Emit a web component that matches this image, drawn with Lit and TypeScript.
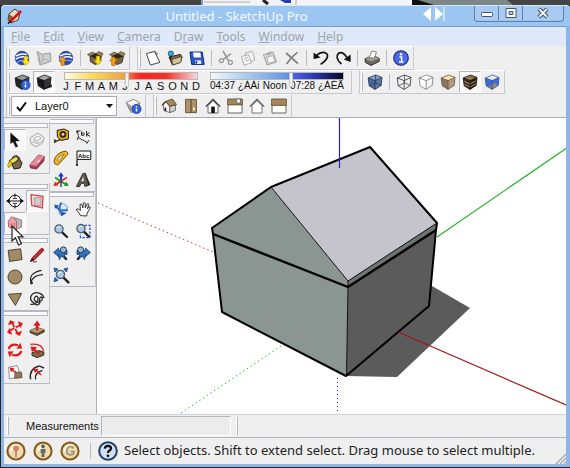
import { LitElement, html, svg, css } from "lit";
import { customElement, property } from "lit/decorators.js";

const globe = svg`
  <circle cx="8" cy="8" r="6.8" fill="#2448b8" stroke="#24408c" stroke-width=".8"/>
  <path d="M2 6.2Q7 2.6 13 4.6M1.6 9.2Q8 5 14.4 8" stroke="#fff" stroke-width="1.5" fill="none"/>
  <path d="M3 12.4Q8 9 13.6 11" stroke="#8fb4f4" stroke-width="1.1" fill="none"/>`;
const box = svg`
  <path d="M3 6L9 3.6L14.4 6.4L13 12.6L8 14.6L3.4 11.6Z" fill="#75623f" stroke="#2d2518" stroke-width=".8"/>
  <path d="M3 6L8.4 8.4L14.4 6.4L9 3.6Z" fill="#2d2518"/>
  <path d="M3 6L.4 4.6L5.6 2L8.6 3.8ZM14.4 6.4L16 3.6L11.4 1.4L9 3.8Z" fill="#9a8660" stroke="#3b311f" stroke-width=".6"/>`;
const down = (x: number, y: number) => svg`
  <path transform="translate(${x} ${y})" d="M-1.7 -4.4H1.7V0H4L0 4.4L-4 0H-1.7Z" fill="#ffe313" stroke="#c49700" stroke-width=".6"/>`;
const up = (x: number, y: number) => svg`
  <path transform="translate(${x} ${y})" d="M-1.7 4.4H1.7V0H4L0 -4.4L-4 0H-1.7Z" fill="#f59a18" stroke="#a85e08" stroke-width=".6"/>`;
const info = svg`
  <circle cx="11.5" cy="11" r="4.6" fill="#2e63d8" stroke="#173a96" stroke-width=".7"/>
  <path d="M11.5 10.4V13.4M11.5 8V9.2" stroke="#fff" stroke-width="1.5"/>`;
const cube = (top: string, left: string, right: string, edge: string, extra: unknown = "") => svg`
  <path d="M1.2 4L8.6 1L15 3.4L8.2 6.6Z" fill="${top}"/>
  <path d="M1.2 4L8.2 6.6L8 15.4L2.2 11.8Z" fill="${left}"/>
  <path d="M15 3.4L8.2 6.6L8 15.4L14.2 11.4Z" fill="${right}"/>
  ${extra}
  <path d="M1.2 4L8.6 1L15 3.4L14.2 11.4L8 15.4L2.2 11.8ZM1.2 4L8.2 6.6L15 3.4M8.2 6.6L8 15.4" fill="none" stroke="${edge}" stroke-width=".8"/>`;
const lens = (x: number, y: number) => svg`
  <path d="M${x + 2.6} ${y + 2.8}L${x + 8} ${y + 8}" stroke="#222" stroke-width="2.4" stroke-linecap="round"/>
  <circle cx="${x}" cy="${y}" r="4.1" fill="#a9c8e4" stroke="#4c5d70" stroke-width="1.3"/>
  <path d="M${x - 2} ${y - 1}Q${x - 1} ${y - 2.4} ${x + 1} ${y - 2.2}" stroke="#fff" fill="none"/>`;

const icons: Record<string, unknown> = {
  globeDown: svg`${globe}${down(11.8, 11)}`,
  globeUp: svg`${globe}${up(4.8, 11)}`,
  terrain: svg`<path d="M1 1.6L6.4 4.2L14.4 3L15 11.4L4 15L3.2 6.6Z" fill="#cfcfcf" stroke="#9c9c9c"/><path d="M1 1.6L2.4 10L4 15M6.4 4.2L7 9L15 11.4M7 9L4 15" stroke="#b0b0b0" fill="none"/>`,
  boxDown: svg`${box}${down(11, 10.4)}`,
  boxUp: svg`${box}${up(4.4, 11)}`,
  page: svg`<path d="M1.4 3.6L9.6 1.4L14.8 12.4L5.4 15Z" fill="#fff" stroke="#444" stroke-width="1"/><path d="M9.6 1.4L12.6 3.6L10.6 4.4Z" fill="#ccc" stroke="#444" stroke-width=".7"/>`,
  open: svg`<path d="M2 7L13.6 4.4L15 7.4L13.4 12.4L5.4 15Z" fill="#7b6746" stroke="#2c2418"/><path d="M5 9.4L15 6.6L13.6 12.4L5.6 15Z" fill="#d4c39a" stroke="#4e4128" stroke-width=".7"/><circle cx="3.8" cy="3.6" r="2.6" fill="#35a8dc" stroke="#0b4c74" stroke-width=".8"/><path d="M3.6 6V9" stroke="#111" stroke-width="1.2"/>`,
  save: svg`<path d="M1 2H13.2L15.2 14.4H2.6Z" fill="#2b55c8" stroke="#12297e"/><path d="M4 2.4H11.4L12 7.6H4.8Z" fill="#fff"/><path d="M6 10.2H12L12.4 14H6.4Z" fill="#dfe6fb"/><path d="M7.4 11V13.6" stroke="#12297e" stroke-width="1.4"/>`,
  cut: svg`<path d="M5 1L10.4 10.6M13 3.6L5 9.6" stroke="#999" stroke-width="1.6" fill="none"/><circle cx="12.4" cy="12.4" r="2" fill="none" stroke="#999" stroke-width="1.3"/><circle cx="3.4" cy="10.6" r="2" fill="none" stroke="#999" stroke-width="1.3"/>`,
  copy: svg`<path d="M5 3L12.6 1.4L14.8 10L8 12.6Z" fill="#f4f4f4" stroke="#b0b0b0"/><path d="M1.4 6.6L8.6 4.6L11.4 13L4 15.2Z" fill="#f6f6f6" stroke="#b0b0b0"/><path d="M4 8.6L8 7.6M5 11L9 9.8" stroke="#b4b4b4"/>`,
  paste: svg`<path d="M1.4 4.6L11 2L14.6 12L5 15Z" fill="#d4d4d4" stroke="#a4a4a4"/><path d="M4.6 7.4L11 5.6L13 11.4L6.6 13.4Z" fill="#f8f8f8" stroke="#b0b0b0"/><path d="M4.6 3.4L8.6 1.2L9 4.2L5.4 5.2Z" fill="#a8a8a8"/>`,
  del: svg`<path d="M2 3Q8 8 14 13.6M13.4 2.4Q7 7 2.6 14" stroke="#808080" stroke-width="1.7" fill="none"/>`,
  undo: svg`<path d="M3.6 5.4Q9 .4 13.6 3.6Q17 8 7.6 14.4" stroke="#111" stroke-width="1.7" fill="none"/><path d="M.6 2.4V9L7.6 7.4Z" fill="#111"/>`,
  redo: svg`<path d="M12 7.6Q7.8 1 3.6 3.2Q-.6 7.6 6.4 14" stroke="#111" stroke-width="1.7" fill="none"/><path d="M15.6 4.4V12L8.8 9.4Z" fill="#111"/>`,
  print: svg`<path d="M1 8.6L9.6 5.6L15.2 8.4V11.4L7 15.4L1.4 12.4Z" fill="#6d6a60" stroke="#2f2d29"/><path d="M1 8.6L6.8 11.2L15.2 8.4L9.6 5.6Z" fill="#a29e90"/><path d="M5 7.6L8 1L12.4 2L10.4 8.2Z" fill="#fff" stroke="#666" stroke-width=".8"/>`,
  about: svg`<circle cx="8" cy="8" r="7.3" fill="#4a68ee" stroke="#1b2b6c" stroke-width="1.1"/><path d="M6.4 7H8.6V12M6 12.1H10.6" stroke="#fff" stroke-width="1.5" fill="none"/><circle cx="8" cy="4.2" r="1.2" fill="#fff"/>`,
  shadowInfo: svg`${cube("#9a9a9a", "#252525", "#3d3d3d", "#111")}${info}`,
  shadow: svg`<path d="M8 15.6L16 13L15.600 10.400L9 11Z" fill="#222"/>${cube("#a8a8a8", "#181818", "#333", "#111")}`,
  xray: cube("#87a4cc", "#4d6a98", "#5877a8", "#1f3252", svg`<path d="M2.2 11.8L8.6 8.8L14.2 11.4M8.6 8.8V1" stroke="#1f3252" stroke-width=".7" fill="none"/>`),
  wire: cube("none", "none", "none", "#333", svg`<path d="M2.2 11.8L8.6 8.8L14.2 11.4M8.6 8.8V1" stroke="#333" stroke-width=".7" fill="none"/>`),
  hidden: cube("#fff", "#fff", "#f2f2f2", "#777"),
  shaded: cube("#f6e6a8", "#8a7560", "#b39a78", "#665544"),
  textured: cube("#8c7044", "#3a2c1c", "#241a10", "#111", svg`<path d="M1.6 7L8 10L14.8 6.6M1.8 10L8 13L14.4 9.6M3.6 3.2L10.6 5.6" stroke="#b09468" stroke-width="1" fill="none"/>`),
  mono: cube("#f2ecc8", "#8a7b50", "#9c8b62", "#3454a8", svg`<path d="M1.2 4L8.2 6.6L8.1 11L2.2 11.8Z" fill="#3a6be0"/><path d="M8.2 6.6L15 3.4L14.2 11.4L11 8.4L8.1 11Z" fill="#3a6be0"/>`),
  layers: svg`<path d="M1 4.6L8.6 1.4L14.8 5L13 11.6L6 14.6Z" fill="#c8c8c8" stroke="#777" stroke-width=".8"/><path d="M1 4.6L8.6 1.4L14.8 5L6.6 8.4Z" fill="#fafafa" stroke="#888" stroke-width=".8"/><path d="M2.4 7L6.6 10.8M3.6 9.6L6.4 12.6" stroke="#777"/>${info}`,
  iso: svg`<path d="M2.4 7L5 4L8.8 8V14.6L2.8 12.6Z" fill="#fff" stroke="#555" stroke-width=".8"/><path d="M8.8 8L14.4 7.2V12.4L8.8 14.6Z" fill="#d4d4d4" stroke="#555" stroke-width=".8"/><path d="M4.6 3.4L11.4 1L15.6 6.6L8.8 8.4Z" fill="#a4875a" stroke="#4a3b25" stroke-width=".8"/><path d="M4.6 3.4L1 7.4" stroke="#4a3b25" stroke-width="1.4"/><path d="M4.4 9.6V13" stroke="#222" stroke-width="1.8"/>`,
  topv: svg`<path d="M2.600 1.400H13.400V14.600H2.600Z" fill="#b0936a" stroke="#6e5a3a"/><path d="M8 1.400V14.600" stroke="#4e3f28"/><path d="M10 9.400H11.600V12H10Z" fill="#fff"/>`,
  front: svg`<path d="M3 7.6V15H13V7.6L8 2.6Z" fill="#fff" stroke="#666"/><path d="M.8 8.6L8 1.4L15.2 8.6" fill="none" stroke="#333" stroke-width="1.3"/><path d="M6.2 8.6H9.8V15H6.2Z" fill="#111"/>`,
  rightv: svg`<path d="M1 6.6H15V15H1Z" fill="#fff" stroke="#666"/><path d="M.6 1H15.4V6.8H.6Z" fill="#a4875a" stroke="#5e4c30" stroke-width=".8"/><path d="M9.6 1H13.4V5H9.6Z" fill="#fff" stroke="#555" stroke-width=".7"/>`,
  back: svg`<path d="M3 7.6V15H13V7.6L8 2.6Z" fill="#fff" stroke="#777"/><path d="M.8 8.6L8 1.4L15.2 8.6" fill="none" stroke="#555" stroke-width="1.2"/>`,
  leftv: svg`<path d="M1 6.6H15V15H1Z" fill="#fff" stroke="#666"/><path d="M.6 1H15.4V7.4H.6Z" fill="#a4875a" stroke="#5e4c30" stroke-width=".8"/>`,
  select: svg`<path d="M3.400 .4V12L6 10L8.600 15.600L11 14.600L8.400 9.200L12.800 9Z" fill="#111"/>`,
  component: svg`<path d="M1 6L8.600 1L15 5.400L13.600 11L6.600 15L2 11.600Z" fill="#f0f0f0" stroke="#a6a6a6"/><path d="M5 6.600L9 4L12 6.200L8 9Z" fill="#fff" stroke="#999" stroke-width=".8"/><path d="M2 11.600L5 9.800V6.600M5 9.800L8 12V9M8 12L13.600 8.600" fill="none" stroke="#b4b4b4"/>`,
  paint: svg`<path d="M4 8L11.6 3.8L15 9L13 14L7 15Z" fill="#786b4d" stroke="#211d13"/><ellipse cx="6.8" cy="6.4" rx="5" ry="2.4" transform="rotate(-32 6.8 6.4)" fill="#f4de4a" stroke="#222"/><path d="M2.6 7.6Q-.4 11 1.4 13.6Q4.6 12.8 5 8.4Z" fill="#f7d21c" stroke="#8f7400" stroke-width=".7"/><path d="M5 4Q9 -1 13 4.4" stroke="#222" fill="none"/>`,
  eraser: svg`<path d="M.8 11L9.400 1L15.400 2.600L14.800 7L7.6 15L1.6 14Z" fill="#a83a54" stroke="#6e2334" stroke-width=".8"/><path d="M.8 11L9.400 1L15.400 2.600L7.400 12Z" fill="#e58a9c"/><path d="M7.6 8.4L10.8 5.4L10.4 8Z" fill="#fff"/>`,
  section: svg`<circle cx="8" cy="8" r="5.8" fill="#fff" stroke="#111"/><path d="M-.4 8H16.400M8 .6V4.6M8 11.400V15.400" stroke="#111"/><path d="M-.6 8L2.4 5.4V10.6ZM16.6 8L13.6 5.4V10.6Z" fill="#111"/><path d="M5.800 5.600H10.200M5.800 10.400H10.200" stroke="#333"/>`,
  planes: svg`<path d="M5 5L12 4.4V12.6L6 12.4Z" fill="#c9c9c9" stroke="#777"/><path d="M2 1.6L14 3.4L13.4 15L2.8 12.4Z" fill="#eec5c5" fill-opacity=".45" stroke="#d7434c" stroke-width="1.3"/>`,
  cuts: svg`<path d="M7 2.6L14.6 5V12L8 15L5 12Z" fill="#b8b8b8" stroke="#8a8a8a"/><path d="M1.2 6.4L4.8 1.6L9.4 6V14.6L1.8 12Z" fill="#e7a5a5" stroke="#cc5058" stroke-width="1"/><path d="M4.6 8V12.4M7 8V13" stroke="#b86c70"/>`,
  rect: svg`<path d="M1.2 3.4L13.6 1.8L15 12.6L2.6 14.4Z" fill="#a18a66" stroke="#50452f"/>`,
  circle: svg`<circle cx="8" cy="8" r="7" fill="#a18a66" stroke="#50452f"/>`,
  polygon: svg`<path d="M1.2 3.2L14.6 2.4L8.4 14.4Z" fill="#a18a66" stroke="#50452f"/>`,
  pencil: svg`<path d="M1.4 14.6L3 11.2L12 1.6Q14.4 .8 14.8 3.4L5.4 13Z" fill="#d8232b" stroke="#5c0b10" stroke-width=".8"/><path d="M1.4 14.6L3 11.2L5.4 13Z" fill="#222"/><path d="M4 14.8H8" stroke="#222" stroke-width=".8"/>`,
  arc: svg`<path d="M2.4 14.6Q-1.6 4 12.6 1.4M2 13.4Q4 6 14 5.6" fill="none" stroke="#222" stroke-width="1.2"/><circle cx="2.6" cy="14" r="1.4" fill="#222"/>`,
  freehand: svg`<path d="M1.4 13.4Q8 14 9 8Q9 4 6.4 5.6Q4 8 6.6 10.4Q10 12 12.6 9.4Q14.6 6.6 12 6Q9.6 7 11 11.6Q9 15.6 5.4 12.4Q1.2 9.8 1.6 6.2Q3.4 1 9.2 1.8Q14.2 3 15 7" fill="none" stroke="#2a2a2a" stroke-width="1.3"/>`,
  move: svg`<path d="M5 2.600L10.600 13.400M13.400 5L2.600 10.800" stroke="#e01a1a" stroke-width="1.8"/><path d="M1.600 4.600L3.400 .6L7.400 2.600ZM11.400 1.800L15.400 3.400L13.400 7.400ZM14.400 11.400L12.600 15.400L8.600 13.400ZM4.600 14.200L.6 12.600L2.600 8.600Z" fill="#e01a1a" stroke="#e01a1a" stroke-width=".8"/><circle cx="8" cy="8" r="1" fill="#fff"/>`,
  pushpull: svg`<path d="M1 10.4L8 7.4L15.2 9.6V12L8 15.6L1 12.6Z" fill="#5f5138" stroke="#312919" stroke-width=".7"/><path d="M1 10.4L8 7.4L15.2 9.6L8 13Z" fill="#b6a27c"/><path d="M6.8 10.4V5.8H4.4L8.2 .6L11.6 5.8H9.4V10.4Z" fill="#e01a1a"/>`,
  rotate: svg`<path d="M1.6 7Q4 1 11 3.2M14.4 9Q12 15 5 12.8" stroke="#e01a1a" stroke-width="2.2" fill="none"/><path d="M9.4 6.8L15.2 6.4L13.4 .8ZM6.6 9.2L.8 9.6L2.6 15.2Z" fill="#e01a1a"/>`,
  follow: svg`<path d="M3 10.6L10.4 8.6L15 10.4L14.6 13.2L8 15.6L3 13.4Z" fill="#7d6b4b" stroke="#352c1c"/><path d="M1.4 2.4Q13 .6 14.6 9.4" stroke="#e01a1a" stroke-width="1.4" fill="none"/><path d="M1.400 4.400L3 10L4.800 8.400L9.400 12.6L10.8 11L6.400 7L8.200 5.200Z" fill="#e01a1a"/>`,
  scale: svg`<path d="M1.6 3.4L10 1.6L14.6 13.4L2.4 14.6Z" fill="#fff" stroke="#777" stroke-width=".8"/><path d="M8 8.400L14.4 8L15 13.6L7.600 14.2Z" fill="#8e7a58" stroke="#4e422d" stroke-width=".7"/><path d="M2.6 3.6L7.6 4.2L6.2 5.4L10 8.4L9 9.6L5 6.8L4 8.6Z" fill="#e01a1a"/>`,
  offset: svg`<path d="M1.6 15.4Q-.4 5 10 2M6.6 15.4Q5 9.4 13.4 6.4" fill="none" stroke="#2a2a2a" stroke-width="1.4"/><path d="M4 4.8L9.6 5L8.4 6.2L12.6 10.6L11.4 11.6L7.4 7.6L6.2 9Z" fill="#e01a1a"/><path d="M10 1.8L15 4" stroke="#2a2a2a" stroke-width="1.4"/>`,
  tape: svg`<path d="M4.2 2.4L11 1L15.400 3V11L8.2 12.4L4.4 9Z" fill="#e8b21f" stroke="#221b08"/><circle cx="10" cy="6.400" r="3.4" fill="#332c1d"/><circle cx="10" cy="6.4" r="1.4" fill="#f3d98a"/><path d="M8 11.4L2 13.6L1.6 11.4M1 14.6L3.6 13.2" stroke="#3a2c08" stroke-width="1.5" fill="none"/>`,
  dimension: svg`<path d="M2 2L3.4 7.6M1 4.2L5.4 2.6M6.6 3.4V7.4Q9.4 8 9.4 5.6Q9 4.2 6.6 5.6M11.6 3V8.6M14.6 4.6L11.8 6.4L15 8.4" stroke="#222" fill="none"/><path d="M2.6 9.4L13 14.8M2 12L4 8M11.6 15.8L14 12.2" stroke="#333" fill="none"/>`,
  protractor: svg`<path d="M1 11Q3 2.600 12 1.200Q15.400 1.400 14.600 4.600L5.400 14.600Q1.200 15.400 1 11Z" fill="#f0b72a" stroke="#6f5209"/><path d="M4.4 10.600Q5.400 5.600 11.200 4.400L5.600 11.400Z" fill="#f0f0f0" stroke="#8d6a10" stroke-width=".8"/>`,
  label: svg`<path d="M2 1H15.800V9.4H2Z" fill="#fff" stroke="#111"/><path d="M2 9.4V15.6" stroke="#111" stroke-width="1.200"/><circle cx="2" cy="15" r="1" fill="#111"/><text x="3" y="7.6" font-size="6" font-weight="700" font-family="Liberation Sans, sans-serif" fill="#111">Abc</text>`,
  axes: svg`<path d="M8 9V3" stroke="#2431d8" stroke-width="2"/><path d="M8 .2L5.2 4.4H10.8Z" fill="#2431d8"/><path d="M8 9L3.6 12" stroke="#d22" stroke-width="2"/><path d="M.4 14L2 9.8L5.4 13.4Z" fill="#d22"/><path d="M2 5.4L13 12.4" stroke="#189a22" stroke-width="1.8"/><path d="M15.8 14L10.8 13.8L13.4 9.8Z" fill="#189a22"/><path d="M8 9L14 5.400" stroke="#d22" stroke-width="1.6"/><path d="M8 9V15" stroke="#224" stroke-width="1.2"/>`,
  text3d: svg`<path d="M1.4 14.4L7.8 1.6L10.4 1.2L13.6 13.4L9.8 14.4L9.2 11L5.8 11.8L4.6 14.6Z" fill="#5f5a50" stroke="#1d1b17" stroke-width=".8"/><path d="M8 4.8L9 8.8L6.4 9.4Z" fill="#eee"/><path d="M10.4 1.2L15.4 12.8L13.6 13.4Z" fill="#221f1a"/>`,
  orbit: svg`<path d="M4.600 4.6L10.6 2.4L14.6 5.6L12.600 12L6.600 13.400Z" fill="#d5e5f6" stroke="#5b7fae" stroke-width=".7"/><path d="M3 5.600Q7 11.4 15 8.6M8.400 1.400Q4.400 7.600 9.400 13.600" fill="none" stroke="#2b6cc4" stroke-width="1.8"/><path d="M1.400 3.400L5.800 4.8L2 7.8ZM13.2 12.4L7.800 15.4L8.8 10.8Z" fill="#1c529f"/>`,
  pan: svg`<path d="M5.6 14.6Q3.4 10.6 1.4 9Q1.6 7.4 3.2 8L5.4 9.4L5 3.6Q5.8 2.4 6.8 3.6L7.8 7L8.4 2Q9.6 .8 10.2 2.2L10.2 6.8L12.2 2.8Q13.6 2.2 13.6 3.6L12.4 7.8L14.4 5.6Q15.6 5.8 15 7.2L12.2 12.2L11.6 15Z" fill="#fff" stroke="#222" stroke-width=".9"/>`,
  zoom: lens(6, 6),
  zoomWin: svg`<path d="M9.6 2.4H15V14.6H5.4V11" stroke="#2440c8" stroke-width="1.2" stroke-dasharray="2.4 1.4" fill="none"/>${lens(6, 5.6)}`,
  prev: svg`<path d="M9 9L13 14" stroke="#222" stroke-width="2.4" stroke-linecap="round"/><path d="M.6 7.400L5.600 3V5.400H14V9.4H11.400V13L8.800 11L6.400 14.600L5.600 9.600V11.800Z" fill="#2c72c0" stroke="#153e72" stroke-width=".8"/><circle cx="10.400" cy="4.800" r="3" fill="#8fbbe6" stroke="#333"/>`,
  next: svg`<path d="M7 9L3 14" stroke="#222" stroke-width="2.4" stroke-linecap="round"/><path d="M15.400 7.400L10.400 3V5.400H2V9.4H4.600V13L7.200 11L9.600 14.600L10.400 9.600V11.800Z" fill="#2c72c0" stroke="#153e72" stroke-width=".8"/><circle cx="5.600" cy="4.800" r="3" fill="#8fbbe6" stroke="#333"/>`,
  extents: svg`${lens(7.4, 7.4)}<path d="M1 1L5 2L2 5ZM14.6 1L10.8 2L13.4 5ZM1 14.6L2 10.6L5 13.4Z" fill="#2c72c0" stroke="#1d4a80" stroke-width=".9"/>`,
};

@customElement("tool-button")
class ToolButton extends LitElement {
  @property() icon = "";
  @property() label = "";
  @property({ type: Boolean }) pressed = false;
  static styles = css`
    :host { display: block; width: 22px; height: 22px; flex: none; }
    .tool { display: grid; place-items: center; box-sizing: border-box; width: 100%; height: 100%; margin: 0; padding: 0; border: 1px solid transparent; background: none; }
    .pressed { background: #f8f8f8; border-color: #b4b4c0 #fff #fff #b4b4c0; }
    .glyph { width: 16px; height: 16px; overflow: visible; }
  `;
  render() {
    return html`<button class="tool ${this.pressed ? "pressed" : ""}" aria-label=${this.label}>
      <svg class="glyph" viewBox="0 0 16 16" aria-hidden="true">${icons[this.icon]}</svg>
    </button>`;
  }
}

type Tool = [string, string, boolean?];
const tools = (list: (Tool | null)[]) =>
  list.map((t) =>
    t ? html`<tool-button icon=${t[0]} label=${t[1]} ?pressed=${t[2] ?? false}></tool-button>` : html`<span class="sep"></span>`
  );

const months = ["J", "F", "M", "A", "M", "J", "J", "A", "S", "O", "N", "D"];
const menus = ["File", "Edit", "View", "Camera", "Draw", "Tools", "Window", "Help"];

@customElement("app-root")
class AppRoot extends LitElement {
  static styles = css`
    :host { display: flex; flex-direction: column; box-sizing: border-box; min-height: 100vh; background: #222; font: 11px/14px "Liberation Sans", Arial, sans-serif; color: #111; }
    .behind { display: block; width: 100%; height: 5px; flex: none; }
    .window { flex: 1; display: flex; flex-direction: column; margin: 0 0 2px 1px; padding: 0 4px 3px 3px; background: #8eb4e8; border-radius: 4px 4px 0 0; }
    .title { display: flex; align-items: flex-start; height: 21px; background: #9cc6f2; margin: 0 -4px 0 -3px; padding: 0 6px 0 5px; border-radius: 4px 4px 0 0; border-top: 1px solid #d4e8fc; box-sizing: border-box; }
    .logo { width: 16px; height: 16px; margin-top: 2px; }
    .caption { flex: 1; margin: 0; padding-left: 28px; text-align: center; font: 13px/20px "Noto Sans", sans-serif; color: #f4f8ff; }
    .spread { width: 22px; height: 15px; flex: none; margin-right: 29px; }
    .winbtns { display: flex; height: 15px; border: 1px solid #5d7fae; border-top: 0; border-radius: 0 0 4px 4px; flex: none; }
    .winbtn { width: 24px; height: 14px; padding: 0; border: 0; border-right: 1px solid #5d7fae; background: #a9cbf1; display: grid; place-items: center; }
    .winbtn:last-child { width: 40px; border-right: 0; border-radius: 0 0 4px 0; }
    .winbtn svg { width: 14px; height: 12px; }
    .menu { display: flex; height: 20px; gap: 13px; padding: 0 7px; background: #dfe9f9; border-top: 1px solid #7c9ccc; box-sizing: border-box; }
    .item { padding: 0; border: 0; background: none; font: 12px/18px "Noto Sans", sans-serif; color: #a0a4a8; }
    .row { display: flex; height: 24px; padding-left: 2px; gap: 7px; background: #efefef; box-sizing: border-box; }
    .bar { display: flex; align-items: center; border: 1px solid #c8c8d0; border-top-color: #fff; box-sizing: border-box; height: 24px; padding-right: 1px; }
    .grip { width: 2px; height: 18px; margin: 0 1px; border-right: 1px solid #b4b4bc; border-left: 1px solid #fff; box-sizing: border-box; }
    .sep { width: 1px; height: 16px; background: #bcbcc4; margin: 0 3px; flex: none; }
    .sliders { display: flex; gap: 4px; padding: 0 2px 0 5px; }
    .slider { display: flex; flex-direction: column; width: 142px; }
    .range { appearance: none; display: block; position: relative; z-index: 1; margin: 0 4px; width: auto; height: 8px; border: 1px solid #b8b8b8; box-sizing: border-box; }
    .range::-webkit-slider-runnable-track { height: 6px; }
    .range::-webkit-slider-thumb { appearance: none; width: 4px; height: 14px; background: #f4f4f4; border: 1px solid #c8c8c8; border-top: 0; box-sizing: border-box; }
    .months { background: linear-gradient(90deg, #fffbe0, #fbd84c 22%, #f3a440 44%, #f22 56%, #f33022 76%, #f99 92%, #f0dcdc); }
    .hours { background: linear-gradient(90deg, #f4f8ff, #b4d4f4 22%, #5f94e8 58%, #4a62ee 62%, #2834a8 80%, #080820); }
    .ticks { display: grid; grid-template-columns: repeat(12, 1fr); text-align: center; line-height: 12px; }
    .times { display: flex; justify-content: space-between; font-size: 10px; line-height: 12px; padding: 0 4px; white-space: pre; }
    .combo { position: relative; width: 106px; height: 20px; margin: 0 5px 0 0; }
    .combo select { appearance: none; width: 100%; height: 100%; padding: 0 20px 0 23px; border: 1px solid #a8a8b4; background: #fff; font: 11px/14px "Liberation Sans", sans-serif; border-radius: 0; color: #111; }
    .check { position: absolute; left: 5px; top: 5px; width: 11px; height: 11px; pointer-events: none; }
    .drop { position: absolute; right: 4px; top: 8px; width: 7px; height: 4px; pointer-events: none; }
    .main { flex: 1; display: flex; background: #efefef; }
    .tray { display: flex; width: 93px; flex: none; border-right: 1px solid #b0b0b8; position: relative; border-top: 1px solid #b0b0b8; box-sizing: border-box; margin-top: -1px; }
    .column { width: 46px; }
    .first { padding-top: 4px; }
    .palette { display: grid; grid-template-columns: 22px 22px; border-bottom: 1px solid #b8b8c4; border-right: 1px solid #c4c4cc; margin-bottom: -1px; }
    .palette::before { content: ""; grid-column: 1 / -1; height: 3px; margin: 1px 0 1px; border: solid #b8b8c4; border-width: 1px 1px 1px 0; background: #fafafa; }
    .gap { margin-bottom: 2px; }
    .wide { margin-bottom: 9px; }
    .pointer { position: absolute; left: 7px; top: 107px; width: 14px; height: 22px; pointer-events: none; }
    .canvas { flex: 1; min-width: 0; background: #fff; border-top: 1px solid #a8a8b4; margin-top: -1px; display: grid; }
    .scene { width: 100%; height: 100%; min-height: 0; display: block; }
    .measure { display: flex; align-items: center; height: 23px; background: #efefef; border-top: 1px solid #d0d0d8; box-sizing: border-box; padding-left: 2px; }
    .measure label { line-height: 16px; padding: 0 2px 0 16px; }
    .value { width: 130px; height: 20px; box-sizing: border-box; border: 1px solid #b4b4bc; border-right-color: #fff; border-bottom-color: #fff; background: #ececec; margin-right: 4px; }
    .status { display: flex; align-items: center; height: 27px; background: #efefef; border-top: 1px solid #b4b4c0; box-sizing: border-box; padding: 0 0 0 2px; }
    .badge { width: 20px; height: 20px; padding: 0; margin-right: 7px; border: 0; background: none; flex: none; }
    .badge svg { display: block; width: 20px; height: 20px; }
    .help { margin: 0 6px 0 4px; }
    .message { flex: 1; min-width: 0; margin: 0; font: 13px/20px "Noto Sans", sans-serif; white-space: nowrap; padding-bottom: 3px; color: #222; }
    .resize { width: 12px; height: 12px; align-self: flex-end; flex: none; }
  `;

  render() {
    return html`
      <svg class="behind" viewBox="0 0 570 5" preserveAspectRatio="none" aria-hidden="true">
        <path d="M0 0H570V5H0Z" fill="#444"/><path d="M202 0H413V5H202Z" fill="#f4f4f6"/>
        <path d="M202 0V5" stroke="#7c9ccc" stroke-width="2"/><path d="M204 2H250" stroke="#aaa"/>
        <path d="M263 0L268 4" stroke="#222" stroke-width="3"/><path d="M280 0H291V3H285Z" fill="#233fb0"/><path d="M296 0V5" stroke="#aaa"/>
        <path d="M412 0H507L513 5H412Z" fill="#7d8886"/><path d="M412 0H418L434 5H412Z" fill="#111"/>
      </svg>
      <div class="window">
        <header class="title">
          <svg class="logo" viewBox="0 0 16 16" aria-hidden="true">
            <path d="M3 6L9 1L14 5L12 12L5 15L2 12Z" fill="#f1dfc4" stroke="#4c3621"/><path d="M3 6L7 9L6 14L2 12Z" fill="#8b5a33"/><path d="M15 3L4 14" stroke="#d3191e" stroke-width="2.6"/><path d="M5 13L2 15.4" stroke="#111" stroke-width="1.6"/>
          </svg>
          <h1 class="caption">Untitled - SketchUp Pro</h1>
          <svg class="spread" viewBox="0 0 22 15" aria-hidden="true"><path d="M8 1V15L0 8ZM12 1V15L20 8Z" fill="#fff"/><path d="M21 1V15" stroke="#fff"/></svg>
          <div class="winbtns">
            <button class="winbtn" aria-label="Minimize"><svg viewBox="0 0 14 12"><rect x="1.5" y="5.5" width="11" height="4" rx="1" fill="#fff" stroke="#44566e"/></svg></button>
            <button class="winbtn" aria-label="Maximize"><svg viewBox="0 0 14 12"><path d="M2 1.5H12V10.5H2Z" fill="#fff" stroke="#44566e"/><path d="M5 4.5H9V7.5H5Z" fill="#a9cbf1" stroke="#44566e"/></svg></button>
            <button class="winbtn" aria-label="Close"><svg viewBox="0 0 14 12"><path d="M3 2L11 10M11 2L3 10" stroke="#44566e" stroke-width="4"/><path d="M3.4 2.4L10.6 9.6M10.6 2.4L3.4 9.6" stroke="#fff" stroke-width="2"/></svg></button>
          </div>
        </header>
        <nav class="menu">${menus.map((m) => {
          const k = m === "Draw" ? 1 : 0;
          return html`<button class="item">${m.slice(0, k)}<u>${m[k]}</u>${m.slice(k + 1)}</button>`;
        })}</nav>
        <div class="row">
          <div class="bar"><span class="grip"></span>${tools([["globeDown", "Get current view"], ["terrain", "Toggle terrain"], ["globeUp", "Place model"], null, ["boxDown", "Get models"], ["boxUp", "Share model"]])}</div>
          <div class="bar"><span class="grip"></span>${tools([["page", "New"], ["open", "Open"], ["save", "Save"], null, ["cut", "Cut"], ["copy", "Copy"], ["paste", "Paste"], ["del", "Erase"], null, ["undo", "Undo"], ["redo", "Redo"], null, ["print", "Print"], null, ["about", "Model info"]])}</div>
        </div>
        <div class="row">
          <div class="bar"><span class="grip"></span>${tools([["shadowInfo", "Shadow settings"], ["shadow", "Show shadows", true]])}
            <div class="sliders">
              <div class="slider"><input class="range months" type="range" aria-label="Date" min="0" max="100" value="47">
                <div class="ticks">${months.map((m) => html`<span>${m}</span>`)}</div></div>
              <div class="slider"><input class="range hours" type="range" aria-label="Time" min="0" max="100" value="61">
                <div class="times"><span>04:37 ¿ÀÀi</span><span>Noon</span><span>07:28 ¿ÀÈÃ</span></div></div>
            </div>
          </div>
          <div class="bar"><span class="grip"></span>${tools([["xray", "X-ray"], null, ["wire", "Wireframe"], ["hidden", "Hidden line"], ["shaded", "Shaded"], ["textured", "Shaded with textures", true], ["mono", "Monochrome"]])}</div>
        </div>
        <div class="row">
          <div class="bar"><span class="grip"></span>
            <div class="combo"><select aria-label="Layer"><option>Layer0</option></select>
              <svg class="check" viewBox="0 0 11 11"><path d="M1 6L4 9.4L10 1.4" fill="none" stroke="#111" stroke-width="1.9"/></svg>
              <svg class="drop" viewBox="0 0 7 4"><path d="M0 0H7L3.5 4Z" fill="#111"/></svg></div>
            ${tools([["layers", "Layer manager"]])}</div>
          <div class="bar"><span class="grip"></span>${tools([["iso", "Iso"], ["topv", "Top"], ["front", "Front"], ["rightv", "Right"], ["back", "Back"], ["leftv", "Left"]])}</div>
        </div>
        <main class="main">
          <div class="tray">
            <div class="column first">
              <div class="palette wide">${tools([["select", "Select", true], ["component", "Make component"], ["paint", "Paint bucket"], ["eraser", "Eraser"]])}</div>
              <div class="palette gap">${tools([["section", "Section plane"], ["planes", "Display section planes", true], ["cuts", "Display section cuts", true]])}</div>
              <div class="palette">${tools([["rect", "Rectangle"], ["pencil", "Line"], ["circle", "Circle"], ["arc", "Arc"], ["polygon", "Polygon"], ["freehand", "Freehand"]])}</div>
              <div class="palette">${tools([["move", "Move"], ["pushpull", "Push/Pull"], ["rotate", "Rotate"], ["follow", "Follow me"], ["scale", "Scale"], ["offset", "Offset"]])}</div>
            </div>
            <div class="column">
              <div class="palette">${tools([["tape", "Tape measure"], ["dimension", "Dimension"], ["protractor", "Protractor"], ["label", "Text"], ["axes", "Axes"], ["text3d", "3D text"]])}</div>
              <div class="palette">${tools([["orbit", "Orbit"], ["pan", "Pan"], ["zoom", "Zoom"], ["zoomWin", "Zoom window"], ["prev", "Previous"], ["next", "Next"], ["extents", "Zoom extents"]])}</div>
            </div>
            <svg class="pointer" viewBox="0 0 14 22" aria-hidden="true"><path d="M1 1V16L4.4 12.8L7.6 20L10.4 18.8L7.2 11.8H12Z" fill="#fff" stroke="#222" stroke-width="1.2"/></svg>
          </div>
          <div class="canvas">
            <svg class="scene" viewBox="97 118 469 296" preserveAspectRatio="xMidYMid slice" role="img" aria-label="House model">
              <path d="M432 286L470 308L397 377L346 376Z" fill="#5b5b5b"/>
              <path d="M98 203L213 252" stroke="#c03030" stroke-dasharray="1.4 3"/>
              <path d="M281 346L181 413" stroke="#22b022" stroke-dasharray="1.4 3"/>
              <path d="M337.500 378V412" stroke="#2020b0" stroke-dasharray="1 3"/>
              <path d="M437 237L566 148.500" stroke="#1cb41c" stroke-width="1.1"/>
              <path d="M212 228L271 187L348 281V287L346 376L222 312Z" fill="#8b9592"/>
              <path d="M271 187L370 147L437 223L348 281Z" fill="#c5c4cd"/>
              <path d="M348 281L437 223L436 230L429 306L346 376Z" fill="#5b5b5b"/>
              <path d="M348 281L437 223V229L348 287Z" fill="#6d7472"/>
              <path d="M271 187L348 281L437 223M348 281V287L346.500 376" fill="none" stroke="#111"/>
              <path d="M212 228L271 187L370 147L437 223L436 230L429 306L346 376L222 312L213 234Z" fill="none" stroke="#000" stroke-width="2" stroke-linejoin="round"/>
              <path d="M213 234L348 287L436 230" fill="none" stroke="#000" stroke-width="2.400"/>
              <path d="M339.500 118V168" stroke="#2424b8" stroke-width="1.200"/>
              <path d="M398 332L566 405" stroke="#a01414" stroke-width="1.200"/>
            </svg>
          </div>
        </main>
        <div class="measure"><span class="grip"></span><label for="m">Measurements</label><input class="value" id="m" type="text"><span class="grip"></span></div>
        <footer class="status">
          ${[
            ["Geo-location", svg`<circle cx="10" cy="7.500" r="2.800" fill="#d9786c"/><path d="M10 10V16" stroke="#b46a50" stroke-width="1.400"/>`],
            ["Credits", svg`<circle cx="10" cy="5.400" r="1.800" fill="#55565a"/><path d="M7.600 8H12.400V12H11.400V16H8.600V12H7.600Z" fill="#66686c"/>`],
            ["Claim credit", svg`<path d="M13.600 7.400Q11.600 5 9 6Q6 8 7 12Q9 15 13.600 13V10.600H10.600" fill="none" stroke="#9a927e" stroke-width="1.800"/>`],
          ].map(([name, art]) => html`<button class="badge" aria-label=${name}><svg viewBox="0 0 20 20"><circle cx="10" cy="10" r="8.600" fill="#eadcae" stroke="#85571a" stroke-width="2"/><path d="M4 11A6 6 0 0 1 13 4.800Z" fill="#fff8dc"/>${art}</svg></button>`)}
          <span class="sep"></span>
          <button class="badge help" aria-label="Help"><svg viewBox="0 0 20 20"><circle cx="10" cy="10" r="8.800" fill="#cfe0f2" stroke="#1f4168" stroke-width="2"/><path d="M6.800 7.600Q7 4.800 10 4.800Q13.200 5 13 7.600Q12.600 9 10.600 10.200Q10 10.800 10 12" fill="none" stroke="#111" stroke-width="2.200"/><circle cx="10" cy="14.800" r="1.400" fill="#111"/></svg></button>
          <p class="message">Select objects. Shift to extend select. Drag mouse to select multiple.</p>
          <svg class="resize" viewBox="0 0 12 12" aria-hidden="true"><path d="M2 12L12 2M6 12L12 6M10 12L12 10" stroke="#a8a8ac" stroke-width="1.400"/></svg>
        </footer>
      </div>`;
  }
}
